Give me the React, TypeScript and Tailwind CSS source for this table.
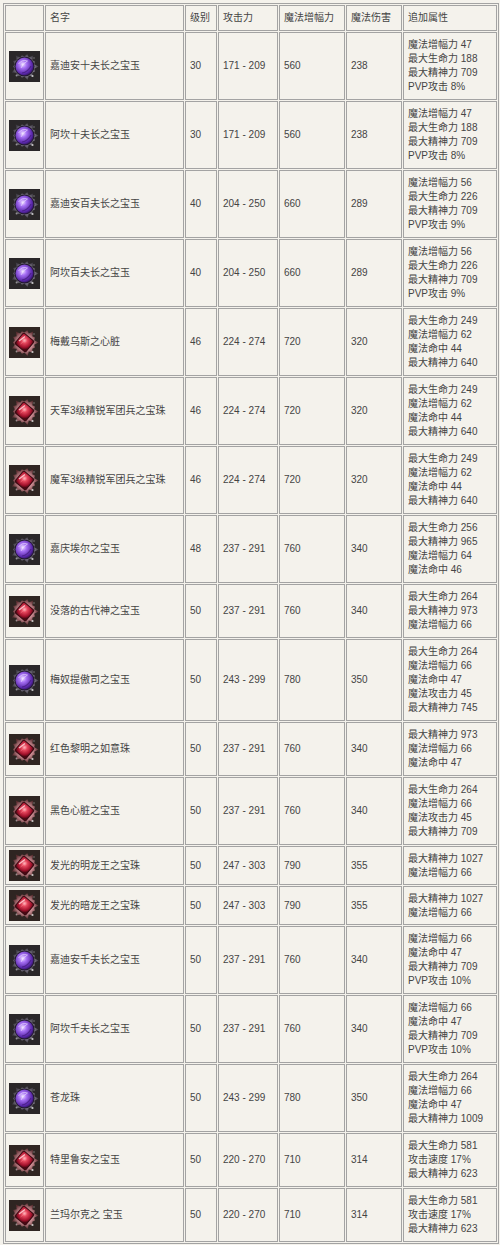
import React from "react";

type Row = {
  gem: "purple" | "red";
  name: string;
  level: string;
  atk: string;
  amp: string;
  dmg: string;
  attrs: string[];
};

const rows: Row[] = [
  { gem: "purple", name: "嘉迪安十夫长之宝玉", level: "30", atk: "171 - 209", amp: "560", dmg: "238", attrs: ["魔法增幅力 47", "最大生命力 188", "最大精神力 709", "PVP攻击 8%"] },
  { gem: "purple", name: "阿坎十夫长之宝玉", level: "30", atk: "171 - 209", amp: "560", dmg: "238", attrs: ["魔法增幅力 47", "最大生命力 188", "最大精神力 709", "PVP攻击 8%"] },
  { gem: "purple", name: "嘉迪安百夫长之宝玉", level: "40", atk: "204 - 250", amp: "660", dmg: "289", attrs: ["魔法增幅力 56", "最大生命力 226", "最大精神力 709", "PVP攻击 9%"] },
  { gem: "purple", name: "阿坎百夫长之宝玉", level: "40", atk: "204 - 250", amp: "660", dmg: "289", attrs: ["魔法增幅力 56", "最大生命力 226", "最大精神力 709", "PVP攻击 9%"] },
  { gem: "red", name: "梅戴乌斯之心脏", level: "46", atk: "224 - 274", amp: "720", dmg: "320", attrs: ["最大生命力 249", "魔法增幅力 62", "魔法命中 44", "最大精神力 640"] },
  { gem: "red", name: "天军3级精锐军团兵之宝珠", level: "46", atk: "224 - 274", amp: "720", dmg: "320", attrs: ["最大生命力 249", "魔法增幅力 62", "魔法命中 44", "最大精神力 640"] },
  { gem: "red", name: "魔军3级精锐军团兵之宝珠", level: "46", atk: "224 - 274", amp: "720", dmg: "320", attrs: ["最大生命力 249", "魔法增幅力 62", "魔法命中 44", "最大精神力 640"] },
  { gem: "purple", name: "嘉庆埃尔之宝玉", level: "48", atk: "237 - 291", amp: "760", dmg: "340", attrs: ["最大生命力 256", "最大精神力 965", "魔法增幅力 64", "魔法命中 46"] },
  { gem: "red", name: "没落的古代神之宝玉", level: "50", atk: "237 - 291", amp: "760", dmg: "340", attrs: ["最大生命力 264", "最大精神力 973", "魔法增幅力 66"] },
  { gem: "purple", name: "梅奴提傲司之宝玉", level: "50", atk: "243 - 299", amp: "780", dmg: "350", attrs: ["最大生命力 264", "魔法增幅力 66", "魔法命中 47", "魔法攻击力 45", "最大精神力 745"] },
  { gem: "red", name: "红色黎明之如意珠", level: "50", atk: "237 - 291", amp: "760", dmg: "340", attrs: ["最大精神力 973", "魔法增幅力 66", "魔法命中 47"] },
  { gem: "red", name: "黑色心脏之宝玉", level: "50", atk: "237 - 291", amp: "760", dmg: "340", attrs: ["最大生命力 264", "魔法增幅力 66", "魔法攻击力 45", "最大精神力 709"] },
  { gem: "red", name: "发光的明龙王之宝珠", level: "50", atk: "247 - 303", amp: "790", dmg: "355", attrs: ["最大精神力 1027", "魔法增幅力 66"] },
  { gem: "red", name: "发光的暗龙王之宝珠", level: "50", atk: "247 - 303", amp: "790", dmg: "355", attrs: ["最大精神力 1027", "魔法增幅力 66"] },
  { gem: "purple", name: "嘉迪安千夫长之宝玉", level: "50", atk: "237 - 291", amp: "760", dmg: "340", attrs: ["魔法增幅力 66", "魔法命中 47", "最大精神力 709", "PVP攻击 10%"] },
  { gem: "purple", name: "阿坎千夫长之宝玉", level: "50", atk: "237 - 291", amp: "760", dmg: "340", attrs: ["魔法增幅力 66", "魔法命中 47", "最大精神力 709", "PVP攻击 10%"] },
  { gem: "purple", name: "苍龙珠", level: "50", atk: "243 - 299", amp: "780", dmg: "350", attrs: ["最大生命力 264", "魔法增幅力 66", "魔法命中 47", "最大精神力 1009"] },
  { gem: "red", name: "特里鲁安之宝玉", level: "50", atk: "220 - 270", amp: "710", dmg: "314", attrs: ["最大生命力 581", "攻击速度 17%", "最大精神力 623"] },
  { gem: "red", name: "兰玛尔克之 宝玉", level: "50", atk: "220 - 270", amp: "710", dmg: "314", attrs: ["最大生命力 581", "攻击速度 17%", "最大精神力 623"] },
];

// spiky ring used as the gem setting
function spikes(n: number, outer: number, inner: number, jitter: number) {
  const pts: string[] = [];
  for (let i = 0; i < n * 2; i++) {
    const a = (i / (n * 2)) * Math.PI * 2;
    const r = i % 2 === 0 ? outer - ((i * 7) % 3) * jitter : inner;
    pts.push(`${(15.5 + Math.cos(a) * r).toFixed(1)},${(15.5 + Math.sin(a) * r).toFixed(1)}`);
  }
  return pts.join(" ");
}

function GemIcon({ gem, id }: { gem: "purple" | "red"; id: number }) {
  const purple = gem === "purple";
  const g = `g${id}`;
  const f = `f${id}`;
  return (
    <svg width="31" height="31" viewBox="0 0 31 31" className="block mx-auto">
      <defs>
        <radialGradient id={g} cx="0.4" cy="0.38" r="0.7">
          <stop offset="0" stopColor={purple ? "#f0e4ff" : "#ffc2c6"} />
          <stop offset="0.3" stopColor={purple ? "#a872f5" : "#e8485e"} />
          <stop offset="0.75" stopColor={purple ? "#5826a8" : "#a3122c"} />
          <stop offset="1" stopColor={purple ? "#26104a" : "#4a0712"} />
        </radialGradient>
        <radialGradient id={f} cx="0.5" cy="0.5" r="0.5">
          <stop offset="0.55" stopColor={purple ? "#aaa4b8" : "#e8a2aa"} />
          <stop offset="1" stopColor={purple ? "#44404a" : "#5e2c30"} />
        </radialGradient>
      </defs>
      <rect width="31" height="31" fill={purple ? "#2a2729" : "#2f2522"} />
      <polygon points={spikes(14, 14, 10, 1.2)} fill={`url(#${f})`} opacity="0.85" />
      {purple ? (
        <>
          <circle cx="15.5" cy="15.5" r="10" fill="#231a30" />
          <circle cx="15.5" cy="15.5" r="9" fill={`url(#${g})`} />
          <path d="M9.5 13 Q13 8 18.5 10 Q14 12 12 17" stroke="#f4ecff" strokeWidth="1" fill="none" opacity="0.55" />
          <path d="M13 22 Q19 21 22 15" stroke="#3a1470" strokeWidth="1.2" fill="none" opacity="0.6" />
        </>
      ) : (
        <>
          <rect x="8" y="8" width="15" height="15" rx="2" fill="#3a0a12" transform="rotate(40 15.5 15.5)" />
          <rect x="9" y="9" width="13" height="13" rx="1.5" fill={`url(#${g})`} transform="rotate(40 15.5 15.5)" />
          <path d="M10 14 L16 9.5" stroke="#ffe2e4" strokeWidth="1.3" opacity="0.8" />
          <path d="M11.5 17 L17.5 12" stroke="#ff8a96" strokeWidth="0.8" opacity="0.6" />
        </>
      )}
      <circle cx="23.5" cy="25" r="1.1" fill="#e0e0e0" opacity="0.85" />
      <circle cx="7.5" cy="24.5" r="0.9" fill="#cfcfcf" opacity="0.6" />
      <circle cx="25" cy="7" r="0.8" fill="#cfcfcf" opacity="0.5" />
    </svg>
  );
}

// base cell look; padding is added per cell so classes never conflict
const base = "border border-[#a3a3a3] bg-[#f4f2ec] align-middle text-left";
const cell = `${base} px-[4px] py-[5px]`;

export default function App() {
  return (
    <div
      className="bg-[#f4f2ec] min-h-screen pl-[3px] pt-[3px] text-[#444444] text-[10px] leading-[14px]"
      style={{ fontFamily: '"Liberation Sans", "Noto Sans CJK SC", sans-serif' }}
    >
      <table className="table-fixed border-separate border-spacing-[1px] border border-[#a3a3a3] w-[496px]">
        <thead>
          <tr>
            <th className={`${cell} w-[39px] h-[25px] font-normal`}></th>
            <th className={`${cell} w-[139px] font-normal`}>名字</th>
            <th className={`${cell} w-[32px] font-normal`}>级别</th>
            <th className={`${cell} w-[60px] font-normal`}>攻击力</th>
            <th className={`${cell} w-[66px] font-normal`}>魔法增幅力</th>
            <th className={`${cell} w-[56px] font-normal`}>魔法伤害</th>
            <th className={`${cell} font-normal`}>追加属性</th>
          </tr>
        </thead>
        <tbody>
          {rows.map((r, i) => {
            const short = r.attrs.length <= 2;
            return (
              <tr key={i}>
                <td className={`${base} px-0 py-[3px]`}>
                  <GemIcon gem={r.gem} id={i} />
                </td>
                <td className={cell}>{r.name}</td>
                <td className={cell}>{r.level}</td>
                <td className={`${cell} whitespace-nowrap`}>{r.atk}</td>
                <td className={cell}>{r.amp}</td>
                <td className={cell}>{r.dmg}</td>
                <td className={short ? `${base} px-[4px] py-[4px]` : cell}>
                  {r.attrs.map((a, j) => (
                    <div key={j} className="whitespace-nowrap">{a}</div>
                  ))}
                </td>
              </tr>
            );
          })}
        </tbody>
      </table>
    </div>
  );
}
